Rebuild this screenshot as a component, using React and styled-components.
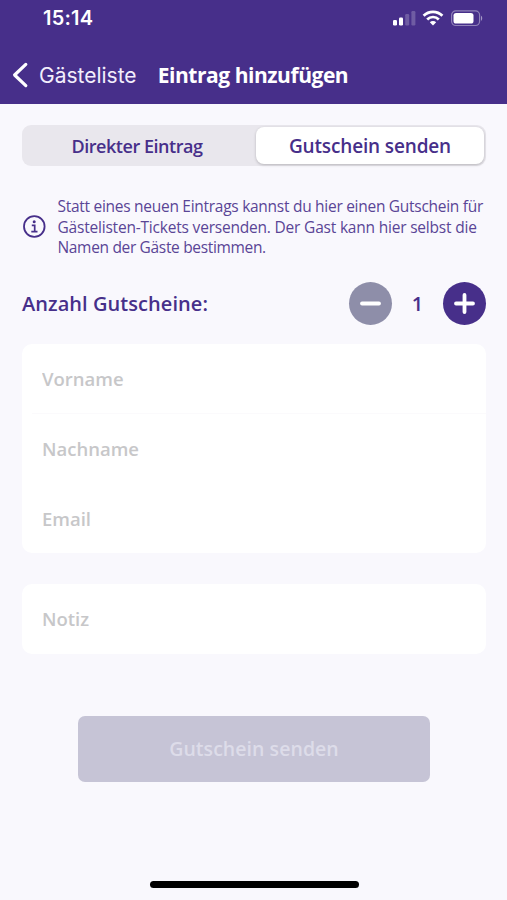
import React, { useState } from "react";
import styled, { createGlobalStyle } from "styled-components";

const Colors = {
  Primary: "#472f8a",
  Background: "#f9f8fd",
  Track: "#e9e7ed",
  Muted: "#8e8ea9",
  Disabled: "#c6c4d6",
  DisabledText: "#dddce9",
  Placeholder: "#c7c7c9"
};

const GlobalStyle = createGlobalStyle`
  * {
    box-sizing: border-box;
  }

  body {
    margin: 0;
    background: ${Colors.Background};
    font-family: "Open Sans", sans-serif;
    color: ${Colors.Primary};
  }

  button,
  input {
    font-family: inherit;
    border: none;
    outline: none;
    padding: 0;
    margin: 0;
  }
`;

const Screen = styled.div`
  height: 900px;
  display: flex;
  flex-direction: column;
  overflow: hidden;
`;

const Header = styled.header`
  height: 104px;
  flex: none;
  background: ${Colors.Primary};
  color: #fff;
`;

const StatusBar = styled.div`
  height: 36px;
  padding: 0 24px 0 43px;
  display: flex;
  align-items: center;
  justify-content: space-between;
`;

const Time = styled.span`
  font: 600 20px/24px Inter, sans-serif;
  letter-spacing: 0.2px;
`;

const StatusIcons = styled.svg`
  width: 91px;
  height: 18px;
`;

const NavBar = styled.nav`
  height: 68px;
  padding: 10px 12px 0;
  display: flex;
  align-items: center;
`;

const BackButton = styled.button`
  display: flex;
  align-items: center;
  gap: 10px;
  background: none;
  color: #f3eefc;
`;

const BackLabel = styled.span`
  padding-top: 1px;
  font: 400 21px/26px Inter, sans-serif;
`;

const Title = styled.h1`
  margin: 0 0 0 21px;
  font-size: 21px;
  font-weight: 700;
  line-height: 28px;
  letter-spacing: -0.45px;
`;

const Content = styled.main`
  flex: 1;
  padding: 21px 21px 0 22px;
  display: flex;
  flex-direction: column;
`;

const Segments = styled.div`
  height: 41px;
  padding: 2px;
  display: grid;
  grid-template-columns: 232px 1fr;
  border-radius: 9px;
  background: ${Colors.Track};
`;

const Segment = styled.button`
  height: 37px;
  padding: ${p => (p.$active ? "1px 0 0" : "1px 6px 0 0")};
  border-radius: 8px;
  color: ${Colors.Primary};
  font-size: ${p => (p.$active ? 19 : 18)}px;
  font-weight: 600;
  letter-spacing: ${p => (p.$active ? "-0.15px" : "-0.45px")};
  background: ${p => (p.$active ? "#fff" : "transparent")};
  box-shadow: ${p => (p.$active ? "0 1px 3px rgba(0, 0, 0, 0.22)" : "none")};
`;

const Hint = styled.div`
  margin-top: 30px;
  display: flex;
  align-items: center;
  gap: 10.5px;
`;

const HintText = styled.p`
  margin: 0;
  white-space: nowrap;
  color: #5a4596;
`;

const HintLine = styled.span`
  display: block;
  font-size: 15.5px;
  line-height: 20.5px;
  letter-spacing: ${p => p.$spacing}px;
`;

const CountRow = styled.div`
  margin-top: 24px;
  height: 43px;
  display: flex;
  align-items: center;
  justify-content: space-between;
`;

const CountLabel = styled.span`
  padding-top: 1px;
  font-size: 20px;
  font-weight: 600;
  letter-spacing: 0.06px;
`;

const Stepper = styled.div`
  display: flex;
  align-items: center;
`;

const StepButton = styled.button`
  width: 43px;
  height: 43px;
  display: flex;
  align-items: center;
  justify-content: center;
  border-radius: 50%;
  color: #fff;
  background: ${p => (p.disabled ? Colors.Muted : Colors.Primary)};
`;

const Count = styled.span`
  width: 51px;
  padding-top: 1px;
  text-align: center;
  font-size: 20px;
  font-weight: 600;
`;

const Card = styled.div`
  margin-top: ${p => p.$top}px;
  border-radius: 10px;
  background: #fff;
`;

const Field = styled.input`
  display: block;
  width: 100%;
  height: ${p => p.$height}px;
  padding: 0 20px;
  border-radius: 10px;
  background: transparent;
  color: ${Colors.Primary};
  font-size: 18.5px;
  font-weight: 600;

  &::placeholder {
    color: ${Colors.Placeholder};
    opacity: 1;
  }
`;

const Divider = styled.div`
  height: 1px;
  margin-left: 10px;
  background: #fbfafc;
`;

const SendButton = styled.button`
  width: 352px;
  height: 66px;
  margin: 62px 0 0 56px;
  border-radius: 7px;
  font-size: 19.5px;
  font-weight: 600;
  letter-spacing: 0.05px;
  background: ${Colors.Disabled};
  color: ${Colors.DisabledText};
`;

const HomeIndicator = styled.div`
  width: 209px;
  height: 7px;
  flex: none;
  margin: 0 0 12px 150px;
  border-radius: 4px;
  background: #000;
`;

const StatusGlyphs = () => (
  <StatusIcons viewBox="0 0 91 18" fill="#fff">
    <rect x="1" y="11" width="4" height="5.5" rx="1.2" />
    <rect x="7" y="8.5" width="4" height="8" rx="1.2" />
    <rect x="13.2" y="5" width="4" height="11.5" rx="1.2" opacity="0.22" />
    <rect x="19.4" y="2" width="4" height="14.5" rx="1.2" opacity="0.22" />
    <g fill="none" stroke="#fff" strokeWidth="2.7">
      <path d="M31.6 6.8a13 13 0 0 1 18.8 0" />
      <path d="M35.2 10.5a8 8 0 0 1 11.6 0" />
    </g>
    <path d="M41 16.6l-3.2-3.3a4.6 4.6 0 0 1 6.4 0z" />
    <rect
      x="59.6"
      y="1.9"
      width="28"
      height="14.6"
      rx="4.2"
      fill="none"
      stroke="#fff"
      strokeOpacity="0.4"
      strokeWidth="1.2"
    />
    <rect x="61.5" y="3.9" width="20" height="10.7" rx="2.6" />
    <path d="M89 6.7c1.6.6 1.6 4.4 0 5z" opacity="0.5" />
  </StatusIcons>
);

const BackIcon = () => (
  <svg width="17" height="26" viewBox="0 0 17 26">
    <path
      d="M13.8 2.4L2.6 13l11.2 10.6"
      fill="none"
      stroke="#fff"
      strokeWidth="3.2"
      strokeLinecap="round"
      strokeLinejoin="round"
    />
  </svg>
);

const InfoIcon = () => (
  <svg width="25" height="25" viewBox="0 0 25 25">
    <circle
      cx="12.3"
      cy="12.5"
      r="10.3"
      fill="none"
      stroke={Colors.Primary}
      strokeWidth="1.8"
    />
    <circle cx="12.2" cy="7.7" r="1.5" fill={Colors.Primary} />
    <path
      d="M9.8 11.4h2.9v6M9.3 17.6h6.2"
      fill="none"
      stroke={Colors.Primary}
      strokeWidth="1.7"
    />
  </svg>
);

const StepIcon = ({ plus }) => (
  <svg width="23" height="23" viewBox="0 0 23 23">
    <path
      d={plus ? "M3 11.5h17M11.5 3v17" : "M3 11.5h17"}
      stroke="currentColor"
      strokeWidth="3.8"
      strokeLinecap="round"
    />
  </svg>
);

const App = () => {
  const [tab, setTab] = useState("voucher");
  const [count, setCount] = useState(1);

  return (
    <>
      <GlobalStyle />
      <Screen>
        <Header>
          <StatusBar>
            <Time>15:14</Time>
            <StatusGlyphs />
          </StatusBar>
          <NavBar>
            <BackButton>
              <BackIcon />
              <BackLabel>Gästeliste</BackLabel>
            </BackButton>
            <Title>Eintrag hinzufügen</Title>
          </NavBar>
        </Header>
        <Content>
          <Segments>
            <Segment $active={tab === "direct"} onClick={() => setTab("direct")}>
              Direkter Eintrag
            </Segment>
            <Segment
              $active={tab === "voucher"}
              onClick={() => setTab("voucher")}
            >
              Gutschein senden
            </Segment>
          </Segments>
          <Hint>
            <InfoIcon />
            <HintText>
              <HintLine $spacing={-0.28}>
                Statt eines neuen Eintrags kannst du hier einen Gutschein für
              </HintLine>
              <HintLine $spacing={-0.2}>
                Gästelisten-Tickets versenden. Der Gast kann hier selbst die
              </HintLine>
              <HintLine $spacing={-0.33}>Namen der Gäste bestimmen.</HintLine>
            </HintText>
          </Hint>
          <CountRow>
            <CountLabel>Anzahl Gutscheine:</CountLabel>
            <Stepper>
              <StepButton
                disabled={count === 1}
                onClick={() => setCount(count - 1)}
              >
                <StepIcon />
              </StepButton>
              <Count>{count}</Count>
              <StepButton onClick={() => setCount(count + 1)}>
                <StepIcon plus />
              </StepButton>
            </Stepper>
          </CountRow>
          <Card $top={19}>
            <Field $height={69} placeholder="Vorname" />
            <Divider />
            <Field $height={70} placeholder="Nachname" />
            <Field $height={69} placeholder="Email" />
          </Card>
          <Card $top={31}>
            <Field $height={70} placeholder="Notiz" />
          </Card>
          <SendButton disabled>Gutschein senden</SendButton>
        </Content>
        <HomeIndicator />
      </Screen>
    </>
  );
};

export default App;
